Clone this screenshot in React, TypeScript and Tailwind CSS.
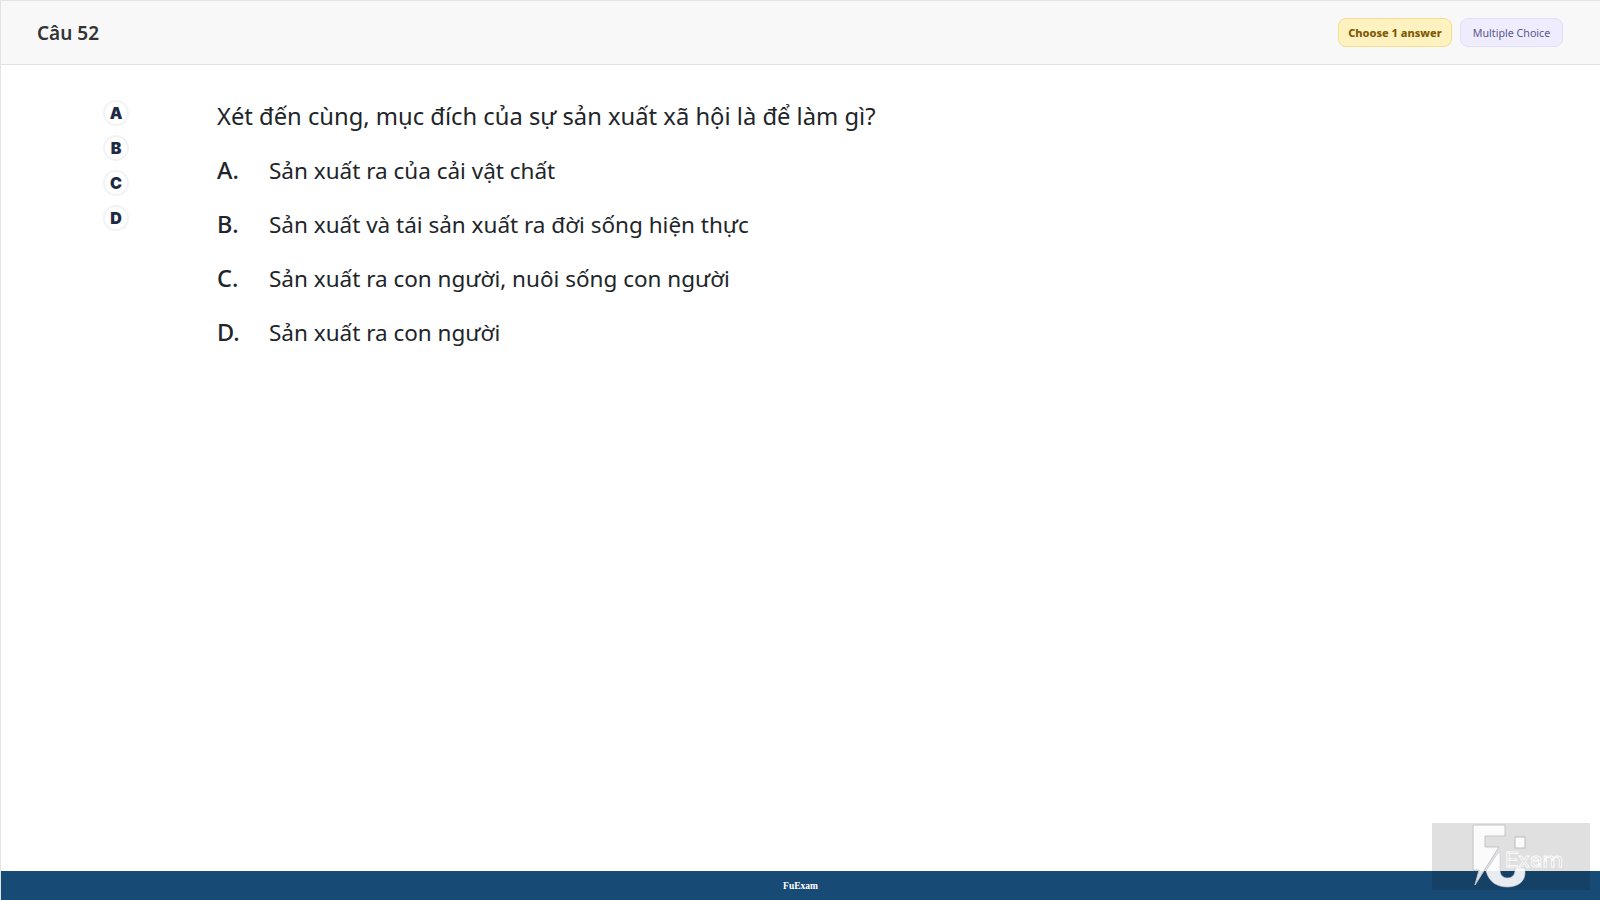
import React from 'react';

const answers = [
  { key: 'A', text: 'Sản xuất ra của cải vật chất' },
  { key: 'B', text: 'Sản xuất và tái sản xuất ra đời sống hiện thực' },
  { key: 'C', text: 'Sản xuất ra con người, nuôi sống con người' },
  { key: 'D', text: 'Sản xuất ra con người' },
];

function Watermark() {
  return (
    <div className="absolute right-[10px] bottom-[10px] h-[67px] w-[158px] bg-black/[0.12]">
      <svg width="158" height="67" viewBox="0 0 158 67" className="absolute inset-0">
        {/* F / U mark */}
        <path d="M41 2H73V13H53V24H67L43 62L47 47H41Z" fill="#fff" fillOpacity="0.85" stroke="#c4c4c4" strokeWidth="1" />
        <path d="M66 30H68V47C68 52 71 55 75.500 55C80 55 83 52 83 47V45H93V50C93 59 85 64 75.500 64C65 64 57 59 54 48Z" fill="#fff" fillOpacity="0.9" stroke="#c4ccd4" strokeWidth="0.6" />
        <rect x="83" y="14" width="10" height="11" fill="#fff" fillOpacity="0.85" stroke="#bcbcbc" strokeWidth="1" />
        <text x="73" y="44" fontFamily="Roboto, sans-serif" fontSize="21" textLength="58" lengthAdjust="spacingAndGlyphs" fill="#cdcdcd" stroke="#fafafa" strokeWidth="1">Exam</text>
      </svg>
    </div>
  );
}

export default function App() {
  return (
    <div className="relative flex h-[900px] w-[1600px] flex-col border-l border-t border-[#e3e3e3] bg-white font-['Noto_Sans',sans-serif] text-[#212529]">
      {/* Header */}
      <header className="flex h-[64px] shrink-0 items-center justify-between border-b border-[#e2e2e2] bg-[#f8f8f8] pl-[36px] pr-[37px]">
        <h1 className="pt-[2px] text-[19px] font-semibold text-[#333]">Câu 52</h1>
        <div className="flex items-center gap-2">
          <span className="flex h-[29px] w-[114px] items-center justify-center rounded-lg border border-[#f5dd8f] bg-[#fef3c0] pt-[2px] text-[11px] font-extrabold text-[#7d5a06]">
            Choose 1 answer
          </span>
          <span className="flex h-[29px] w-[103px] items-center justify-center rounded-lg border border-[#e2dffa] bg-[#efedfd] pt-[2px] text-[10.7px] text-[#5b5590]">
            Multiple Choice
          </span>
        </div>
      </header>

      {/* Body */}
      <main className="flex flex-1">
        <div className="flex w-[216px] shrink-0 flex-col gap-[9px] pl-[102px] pt-[35px]">
          {answers.map((a) => (
            <button
              key={a.key}
              className="flex h-[26px] w-[26px] items-center justify-center rounded-full border-2 border-[#f1f3f5] bg-white font-['Inter',sans-serif] text-[16px] font-black text-[#1e2a44]"
            >
              {a.key}
            </button>
          ))}
        </div>
        <div className="flex-1 pt-[31px]">
          <p className="h-[40px] text-[23.75px] leading-[40px]">Xét đến cùng, mục đích của sự sản xuất xã hội là để làm gì?</p>
          <ul className="mt-[15px] flex flex-col gap-[14px]">
            {answers.map((a) => (
              <li key={a.key} className="flex h-[40px] items-center text-[22.5px]">
                <span className="w-[52px] text-[23.5px] font-medium">{a.key}.</span>
                <span>{a.text}</span>
              </li>
            ))}
          </ul>
        </div>
      </main>

      {/* Footer */}
      <footer className="flex h-[29px] shrink-0 items-center justify-center bg-[#184a76] pt-[1px] font-['Liberation_Serif',serif] text-[9.5px] font-bold text-white">
        FuExam
      </footer>

      <Watermark />
    </div>
  );
}
